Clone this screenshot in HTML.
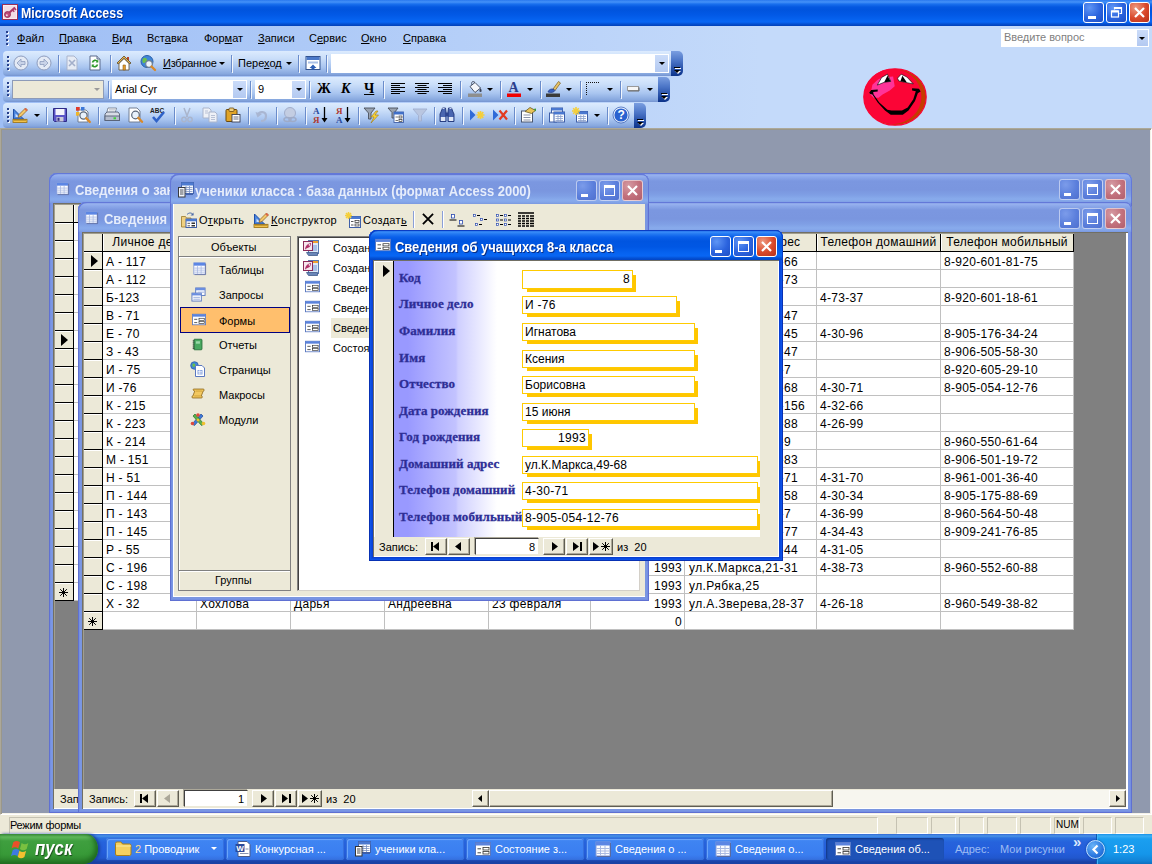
<!DOCTYPE html>
<html lang="ru">
<head>
<meta charset="utf-8">
<title>Microsoft Access</title>
<style>
*{box-sizing:border-box;margin:0;padding:0}
html,body{width:1152px;height:864px;overflow:hidden;background:#9099ae}
body{position:relative;font:11px "Liberation Sans",sans-serif;color:#000}
div,span,b,svg,em{position:absolute}
.s{position:static}
u{text-decoration:underline;text-underline-offset:1px}
svg{overflow:visible}
span,b{white-space:nowrap}
/* ---------- application title bar ---------- */
#title{left:0;top:0;width:1152px;height:26px;background:linear-gradient(#2a78ee 0,#4592f8 2px,#1a70ee 4px,#0558e0 7px,#0054de 10px,#0259e6 15px,#0663f0 20px,#0866f4 22px,#0450d2 24px,#0140b8 26px)}
.cap{font:bold 14px "Liberation Sans",sans-serif;color:#fff;text-shadow:1px 1px 0 #0a2d84;white-space:nowrap;transform-origin:0 50%;transform:scaleX(.924)}
.xb{width:21px;height:21px;border:1px solid #fff;border-radius:3px;background:radial-gradient(circle at 30% 25%,#5e95f5 0,#2b63de 55%,#1d4fc4 100%)}
.xb.c{background:radial-gradient(circle at 30% 25%,#ee9a80 0,#d9482a 55%,#b5311a 100%)}
.xb.i{border-color:rgba(255,255,255,.6);background:radial-gradient(circle at 30% 25%,#7c9cea 0,#5b7fdc 55%,#4f70cf 100%)}
.xb.c.i{background:radial-gradient(circle at 30% 25%,#d59aa3 0,#c2707c 55%,#b05f6d 100%)}
.xb em{position:absolute;background:#fff}
/* ---------- menu + toolbars ---------- */
#dock{left:0;top:26px;width:1152px;height:102px;background:linear-gradient(90deg,#9ebef5 0,#c4dafa 66%,#c4dafa 100%)}
.m{top:6px;font-size:11px}
.grip{width:2px;background:repeating-linear-gradient(#27408b 0,#27408b 2px,transparent 2px,transparent 4px);filter:drop-shadow(1px 1px 0 #f0f5fd)}
.tb{height:25px;border-radius:4px 0 0 4px;background:linear-gradient(#dcebfe 0,#cadef9 30%,#a9c5f0 65%,#86a7de 92%,#7593cf 100%)}
.tbend{width:12px;height:25px;border-radius:0 5px 5px 0;background:linear-gradient(#7a9ee0 0,#4a74c6 40%,#1d469f 80%,#0d3389 100%)}
.sep{width:1px;height:17px;background:#6a8ccb;box-shadow:1px 1px 0 #f1f6fd}
.combo{background:#fff;height:19px}
.cbt{width:13px;height:17px;background:linear-gradient(#cbdcf9,#b3c9f1)}
.dn{width:0;height:0;border:3px solid transparent;border-top:3px solid #000;border-bottom:0}
/* ---------- MDI windows ---------- */
.win{border-radius:8px 8px 0 0}
.win.in{background:#7a96df;box-shadow:inset 0 0 0 1px #5f70d2,inset 0 0 0 2px #7590e2,inset 0 0 0 3px #7a96e4}
.win.ac{background:#0a40d2;box-shadow:inset 0 0 0 1px #0831b4,inset 0 0 0 2px #0d52e8,inset 0 0 0 3px #0a4be0}
.ttl{left:0;top:0;height:30px;border-radius:8px 8px 0 0}
.in>.ttl{background:linear-gradient(#7088de 0,#98b2ee 2px,#8ca8ea 4px,#7b97e0 8px,#7a96df 17px,#7f9fe5 22px,#88abec 26px,#84a6e9 28px,#7b98e0 30px)}
.ac>.ttl{background:linear-gradient(#0a50dc 0,#3a8df8 2px,#2278f2 4px,#0b60ea 7px,#0055e0 11px,#0057e4 17px,#0663f0 23px,#0866f4 26px,#0452d6 28px,#0244c4 30px)}
.in>.ttl{box-shadow:inset 1px 1px 0 #6378d8,inset -1px 0 0 #6378d8}
.ac>.ttl{box-shadow:inset 1px 1px 0 #0a3cc4,inset -1px 0 0 #0a3cc4}
.in .cap{color:#e6edfb;text-shadow:none}
.face{background:#ece9d8}
.hd{background:#ece9d8;border-right:1px solid #000;border-bottom:1px solid #000;box-shadow:inset 1px 1px 0 #fff}
.g{font:12px "Liberation Sans",sans-serif}
.btn3{background:#ece9d8;border:1px solid;border-color:#fff #5f5d52 #5f5d52 #fff;box-shadow:inset -1px -1px 0 #aca899}
.fl{font:bold 13px "Liberation Serif",serif;color:#2e2e96;-webkit-text-stroke:.3px #2e2e96;letter-spacing:.08px}
.fv{background:#fff;border:1px solid #ffcb00;font:12px "Liberation Sans",sans-serif;line-height:16px;letter-spacing:.3px;white-space:nowrap}
.gd{letter-spacing:.3px}
.ga{letter-spacing:.42px}
.gh{letter-spacing:.28px}
/* ---------- status + taskbar ---------- */
#status{left:0;top:814px;width:1152px;height:22px;background:#ece9d8;border-top:1px solid #fff}
#task{left:0;top:836px;width:1152px;height:28px;background:linear-gradient(#3168d5 0,#4993e6 2px,#2b71e0 4px,#2663dc 8px,#245ddb 18px,#2157ce 24px,#1941a5 28px)}
.tk{top:3px;height:22px;border-radius:3px;background:linear-gradient(#5a9bf8 0,#3f84f2 3px,#3a7ef0 17px,#356fe0 22px);box-shadow:inset 0 0 0 1px #3570dd,inset 1px 1px 0 1px #6aa4fa;color:#fff;font-size:11px;overflow:hidden}
.tk b{left:29px;top:5px;font-weight:normal}
.tk.on{background:#1e52b7;box-shadow:inset 1px 1px 2px #123784}
</style>
</head>
<body>
<div id="title" class="a">
<svg style="left:2px;top:4px" width="16" height="16" viewBox="0 0 16 16"><rect x=".5" y=".5" width="15" height="15" fill="#f3dde5" stroke="#9a3058"/><rect x="1.500" y="1.500" width="13" height="13" fill="none" stroke="#fbeef2"/><circle cx="5.500" cy="10.500" r="3" fill="#c04a78" stroke="#8a2450" stroke-width=".8"/><circle cx="4.800" cy="11.200" r="1" fill="#f3dde5"/><path d="M7.500 8.500L13 3.500" stroke="#b03868" stroke-width="2.200"/><path d="M10.500 6l1.800 1.800M12.300 4.200l1.800 1.800" stroke="#b03868" stroke-width="1.400"/></svg>
<span class="cap" id="apptitle" style="left:21px;top:5px;transform:scaleX(.884)">Microsoft Access</span>
<div class="xb" style="left:1083px;top:2px"><em style="left:4px;top:13px;width:8px;height:3px"></em></div>
<div class="xb" style="left:1106px;top:2px"><svg style="left:3px;top:3px" width="13" height="13" viewBox="0 0 13 13"><path d="M4.500 3.500V1.500h7v6h-2" fill="none" stroke="#fff" stroke-width="1.200"/><path d="M4.500 2h7" stroke="#fff" stroke-width="2"/><rect x="1.500" y="5" width="7" height="6" fill="none" stroke="#fff" stroke-width="1.200"/><path d="M1.500 5.500h7" stroke="#fff" stroke-width="2"/></svg></div>
<div class="xb c" style="left:1129px;top:2px"><svg style="left:4px;top:4px" width="11" height="11" viewBox="0 0 11 11"><path d="M1 1l9 9M10 1l-9 9" stroke="#fff" stroke-width="2.200"/></svg></div>
</div>
<div id="dock" class="a">
<div class="grip" style="left:6px;top:5px;height:14px"></div>
<span class="m" id="m0" style="left:17px"><u>Ф</u>айл</span>
<span class="m" id="m1" style="left:59px"><u>П</u>равка</span>
<span class="m" id="m2" style="left:112px"><u>В</u>ид</span>
<span class="m" id="m3" style="left:147px">Вст<u>а</u>вка</span>
<span class="m" id="m4" style="left:204px">Фор<u>м</u>ат</span>
<span class="m" id="m5" style="left:258px"><u>З</u>аписи</span>
<span class="m" id="m6" style="left:309px">С<u>е</u>рвис</span>
<span class="m" id="m7" style="left:361px"><u>О</u>кно</span>
<span class="m" id="m8" style="left:403px"><u>С</u>правка</span>
<div class="combo" style="left:1001px;top:3px;width:148px;height:18px;border:1px solid #fff"><span style="left:2px;top:1px;color:#7f7f7f;letter-spacing:-.05px">Введите вопрос</span><div class="cbt" style="left:135px;top:0;height:16px;width:11px"></div><div class="dn" style="left:137px;top:7px"></div></div>
<div class="tb" style="left:3px;top:25px;width:672px"></div>
<div class="grip" style="left:7px;top:30px;height:15px"></div>
<svg style="left:13px;top:29px" width="16" height="16" viewBox="0 0 16 16" preserveAspectRatio="none"><circle cx="8" cy="8" r="7" fill="#e4eaf5" stroke="#8e9dbe"/><path d="M4 8l4-4v2.5h4v3H8V12z" fill="#c9d3e8" stroke="#8e9dbe" stroke-width=".8"/></svg>
<svg style="left:36px;top:29px" width="16" height="16" viewBox="0 0 16 16" preserveAspectRatio="none"><circle cx="8" cy="8" r="7" fill="#e4eaf5" stroke="#8e9dbe"/><path d="M12 8L8 4v2.5H4v3h4V12z" fill="#c9d3e8" stroke="#8e9dbe" stroke-width=".8"/></svg>
<div class="sep" style="left:58px;top:29px"></div>
<svg style="left:64px;top:29px" width="16" height="16" viewBox="0 0 16 16" preserveAspectRatio="none"><path d="M3 1h7l3 3v11H3z" fill="#e6ebf4" stroke="#a9b4cc"/><path d="M5 5l6 6M11 5l-6 6" stroke="#a3afca" stroke-width="1.6"/></svg>
<svg style="left:87px;top:29px" width="16" height="16" viewBox="0 0 16 16" preserveAspectRatio="none"><path d="M3 1h7l3 3v11H3z" fill="#fff" stroke="#5b6b8c"/><path d="M10 1v3h3" fill="#d5dcea" stroke="#5b6b8c"/><path d="M5.5 7.5a2.8 2.8 0 0 1 5-1M10.5 9.5a2.8 2.8 0 0 1-5 1" fill="none" stroke="#2f9a2a" stroke-width="1.6"/><path d="M11.3 4.6v2.8H8.6zM4.7 12.4V9.6h2.7z" fill="#2f9a2a"/></svg>
<div class="sep" style="left:110px;top:29px"></div>
<svg style="left:116px;top:29px" width="16" height="16" viewBox="0 0 16 16" preserveAspectRatio="none"><path d="M11 2h2v4h-2z" fill="#b5442a"/><path d="M1 8l7-7 7 7-1.2 1L8 3.2 2.2 9z" fill="#e9b44c" stroke="#5a4a28" stroke-width=".8"/><path d="M3 8.5L8 3.6l5 4.9V15H3z" fill="#fff" stroke="#5a4a28" stroke-width=".8"/><path d="M7 10h2.4v5H7z" fill="#e9a02c" stroke="#8a5a1a" stroke-width=".6"/></svg>
<svg style="left:140px;top:29px" width="16" height="16" viewBox="0 0 16 16" preserveAspectRatio="none"><circle cx="7" cy="6.5" r="6" fill="#3f86d8" stroke="#2b5fa8"/><path d="M3 3.5c2-1.5 3.5-.5 4 1s-1.500 3-3 3.500-2-2.500-1-4.500zM8.500 8c1.500-.5 3 0 3 1.500s-1.500 2.500-3 2z" fill="#6cc04a"/><circle cx="9" cy="9" r="3.300" fill="#eef5fb" stroke="#6f7f95" stroke-width="1.200"/><path d="M11.500 11.500l3.500 3.500" stroke="#d98a2b" stroke-width="2.400" stroke-linecap="round"/></svg>
<span id="izb" style="left:163px;top:31px;letter-spacing:-.25px"><u>И</u>збранное</span>
<div class="dn" style="left:219px;top:36px"></div>
<div class="sep" style="left:231px;top:29px"></div>
<span id="per" style="left:238px;top:31px">Пере<u>х</u>од</span>
<div class="dn" style="left:286px;top:36px"></div>
<div class="sep" style="left:298px;top:29px"></div>
<svg style="left:304.5px;top:29px" width="16" height="16" viewBox="0 0 16 16" preserveAspectRatio="none"><rect x="1" y="1.500" width="14" height="13" fill="#fff" stroke="#31528f"/><rect x="1.500" y="2" width="13" height="3" fill="#4a78c8"/><rect x="3" y="6.500" width="10" height="2" fill="#a9c0e6"/><path d="M8 9.500l3.500 3.500h-2v1.500h-3V13h-2z" fill="#2d5fb5"/></svg>
<div class="sep" style="left:326px;top:29px"></div>
<div class="combo" style="left:331px;top:28px;width:338px"><div class="cbt" style="left:324px;top:1px"></div><div class="dn" style="left:328px;top:8px"></div></div>
<div class="tbend" style="left:671px;top:25px"><div style="left:4px;top:17px;width:6px;height:1px;background:#fff"></div><div class="dn" style="left:4px;top:20px;border-top-color:#fff"></div><div style="left:3px;top:16px;width:6px;height:1px;background:#000"></div><div class="dn" style="left:3px;top:19px"></div></div>
<div class="tb" style="left:3px;top:51px;width:660px"></div>
<div class="grip" style="left:7px;top:56px;height:15px"></div>
<div style="left:12px;top:54px;width:92px;height:19px;background:#ece9d8;border:1px solid #8d9bb8"></div>
<div class="dn" style="left:94px;top:62px;border-top-color:#9a9a9a"></div>
<div class="sep" style="left:108px;top:55px"></div>
<div class="combo" style="left:112px;top:54px;width:135px"><span style="left:3px;top:3px">Arial Cyr</span><div class="cbt" style="left:121px;top:1px"></div><div class="dn" style="left:125px;top:8px"></div></div>
<div class="sep" style="left:250px;top:55px"></div>
<div class="combo" style="left:255px;top:54px;width:51px"><span style="left:3px;top:3px">9</span><div class="cbt" style="left:37px;top:1px"></div><div class="dn" style="left:41px;top:8px"></div></div>
<div class="sep" style="left:309px;top:55px"></div>
<span style="left:317px;top:55px;font:bold 14px 'Liberation Serif',serif">Ж</span>
<span style="left:341px;top:55px;font:italic bold 14px 'Liberation Serif',serif">К</span>
<span style="left:364px;top:55px;font:bold 14px 'Liberation Serif',serif"><u>Ч</u></span>
<div class="sep" style="left:383px;top:55px"></div>
<svg style="left:390px;top:55px" width="16" height="16" viewBox="0 0 16 16" preserveAspectRatio="none"><path d="M1 2.500h14M1 4.500h9M1 6.500h14M1 8.500h9M1 10.500h14M1 12.500h9" stroke="#000" stroke-width="1"/></svg>
<svg style="left:414px;top:55px" width="16" height="16" viewBox="0 0 16 16" preserveAspectRatio="none"><path d="M1 2.500h14M3.500 4.500h9M1 6.500h14M3.500 8.500h9M1 10.500h14M3.500 12.500h9" stroke="#000" stroke-width="1"/></svg>
<svg style="left:437px;top:55px" width="16" height="16" viewBox="0 0 16 16" preserveAspectRatio="none"><path d="M1 2.500h14M6 4.500h9M1 6.500h14M6 8.500h9M1 10.500h14M6 12.500h9" stroke="#000" stroke-width="1"/></svg>
<div class="sep" style="left:460px;top:55px"></div>
<svg style="left:467px;top:55px" width="16" height="16" viewBox="0 0 16 16" preserveAspectRatio="none"><path d="M3 5.500l5-4 5.500 5.500-5.500 4.500z" fill="#f4f6fa" stroke="#3a4358" stroke-width=".9"/><path d="M8 1.500C5 -1 4 2 5 4" fill="none" stroke="#3a4358" stroke-width=".9"/><path d="M13.500 7c1.500 2 1.500 4 0 4s-1.500-2 0-4z" fill="#3a4358"/><rect x="1" y="12.500" width="14" height="3.500" fill="#8e8e8e"/></svg>
<div class="dn" style="left:487px;top:62px"></div>
<div class="sep" style="left:500px;top:55px"></div>
<svg style="left:506px;top:55px" width="16" height="16" viewBox="0 0 16 16" preserveAspectRatio="none"><text x="2.500" y="11" font-family="Liberation Serif,serif" font-size="14" font-weight="bold" fill="#2a3e8c">A</text><rect x="1" y="12.500" width="14" height="3.500" fill="#f00000"/></svg>
<div class="dn" style="left:527px;top:62px"></div>
<div class="sep" style="left:540px;top:55px"></div>
<svg style="left:545px;top:55px" width="16" height="16" viewBox="0 0 16 16" preserveAspectRatio="none"><path d="M8 8l5.500-7.500 2 1.500L10 9.500z" fill="#e8c46a" stroke="#7a5a18" stroke-width=".7"/><path d="M3 11c1-3 4-3.500 6-2.500l1 1c-1 2-4 2.500-7 1.500z" fill="#3a62c0" stroke="#1f3a88" stroke-width=".7"/><rect x="1" y="12.500" width="14" height="3.500" fill="#3a3a3a"/></svg>
<div class="dn" style="left:566px;top:62px"></div>
<div class="sep" style="left:580px;top:55px"></div>
<svg style="left:585px;top:55px" width="16" height="16" viewBox="0 0 16 16" preserveAspectRatio="none"><g shape-rendering="crispEdges" fill="#111"><rect x="1" y="1" width="1" height="1"/><rect x="3" y="1" width="1" height="1"/><rect x="5" y="1" width="1" height="1"/><rect x="7" y="1" width="1" height="1"/><rect x="9" y="1" width="1" height="1"/><rect x="11" y="1" width="1" height="1"/><rect x="13" y="1" width="1" height="1"/><rect x="1" y="3" width="1" height="1"/><rect x="1" y="5" width="1" height="1"/><rect x="1" y="7" width="1" height="1"/><rect x="1" y="9" width="1" height="1"/><rect x="1" y="11" width="1" height="1"/><rect x="1" y="13" width="1" height="1"/></g></svg>
<div class="dn" style="left:607px;top:62px"></div>
<div class="sep" style="left:620px;top:55px"></div>
<svg style="left:625px;top:55px" width="16" height="16" viewBox="0 0 16 16" preserveAspectRatio="none"><rect x="2.500" y="5.500" width="11" height="4" fill="#f6f6f6" stroke="#9a9a9a"/><path d="M3 10h11V6.500" fill="none" stroke="#666" stroke-width="1"/></svg>
<div class="dn" style="left:647px;top:62px"></div>
<div class="tbend" style="left:658px;top:51px"><div style="left:4px;top:17px;width:6px;height:1px;background:#fff"></div><div class="dn" style="left:4px;top:20px;border-top-color:#fff"></div><div style="left:3px;top:16px;width:6px;height:1px;background:#000"></div><div class="dn" style="left:3px;top:19px"></div></div>
<div class="tb" style="left:3px;top:77px;width:636px"></div>
<div class="grip" style="left:7px;top:82px;height:15px"></div>
<svg style="left:12px;top:81px" width="16" height="16" viewBox="0 0 16 16" preserveAspectRatio="none"><path d="M1.500 2v10h10z" fill="#4a86e0" stroke="#1f4fa8"/><path d="M3.500 6.500V10H7z" fill="#cfe0fa"/><rect x="1" y="12.300" width="14" height="3.200" fill="#f1c24a" stroke="#9a6f12" stroke-width=".8"/><path d="M3 12.500v1.500M5 12.500v1.500M7 12.500v1.500M9 12.500v1.500M11 12.500v1.500M13 12.500v1.500" stroke="#7a5608" stroke-width=".7"/><path d="M6 10.500l1-3 6.500-6.500 2 2L9 9.500z" fill="#f3c86a" stroke="#8a5a1a" stroke-width=".7"/><path d="M13.500 1l2 2-1.200 1.200-2-2z" fill="#e0604a"/></svg>
<div class="dn" style="left:34px;top:88px"></div>
<div class="sep" style="left:46px;top:81px"></div>
<svg style="left:52px;top:81px" width="16" height="16" viewBox="0 0 16 16" preserveAspectRatio="none"><path d="M1.500 1.500h13v13h-12l-1-1z" fill="#5a55c8" stroke="#2f2b86"/><rect x="3.500" y="2" width="9" height="6" fill="#f4f4fb"/><rect x="4.500" y="10" width="7" height="4.500" fill="#c9c9d8"/><rect x="5.500" y="10.800" width="2" height="3" fill="#2f2b86"/></svg>
<svg style="left:75px;top:81px" width="16" height="16" viewBox="0 0 16 16" preserveAspectRatio="none"><rect x="1" y="0" width="3.500" height="3.500" fill="#e03a2a"/><rect x="1" y="5" width="3.500" height="3.500" fill="#f0b428"/><rect x="6" y="0" width="3.500" height="3.500" fill="#3c78d8"/><path d="M3 3h8l2 2v10H3z" fill="#fff" stroke="#6a7588" stroke-width=".9"/><rect x="1" y="0" width="3.500" height="3.500" fill="#e03a2a"/><rect x="1" y="5" width="3.500" height="3.500" fill="#f0b428"/><rect x="6" y="0.500" width="3" height="3" fill="#3c78d8"/><circle cx="8.500" cy="8.500" r="3.600" fill="#e8f1fb" stroke="#5a6678" stroke-width="1.200"/><path d="M11.200 11.200l3.600 3.800" stroke="#d98a2b" stroke-width="2.400" stroke-linecap="round"/></svg>
<div class="sep" style="left:98px;top:81px"></div>
<svg style="left:104px;top:81px" width="16" height="16" viewBox="0 0 16 16" preserveAspectRatio="none"><path d="M4 1h8.500l-1.500 5.500H2.500z" fill="#fff" stroke="#6a7588" stroke-width=".8"/><path d="M1 7l2-2h11l1.500 2v6.500H1z" fill="#d8dce6" stroke="#555f74" stroke-width=".9"/><rect x="1" y="9" width="14.500" height="4.500" fill="#b4bccd" stroke="#555f74" stroke-width=".9"/><rect x="9.500" y="10.300" width="2.500" height="2" fill="#3fd03a"/><path d="M5 2.800h6M4.600 4.300h6" stroke="#9aa3b5" stroke-width=".7"/></svg>
<svg style="left:127px;top:81px" width="16" height="16" viewBox="0 0 16 16" preserveAspectRatio="none"><path d="M2 1h8l3 3v11H2z" fill="#fff" stroke="#6a7588" stroke-width=".9"/><circle cx="8.500" cy="8" r="3.800" fill="#e8f1fb" stroke="#5a6678" stroke-width="1.200"/><path d="M11.300 10.800l3.700 4" stroke="#d98a2b" stroke-width="2.400" stroke-linecap="round"/></svg>
<svg style="left:150px;top:81px" width="16" height="16" viewBox="0 0 16 16" preserveAspectRatio="none"><text x="0" y="6" font-family="Liberation Sans,sans-serif" font-size="6.500" font-weight="bold" fill="#222">ABC</text><path d="M3 10l3.500 4L14 5" fill="none" stroke="#2f62c8" stroke-width="2.600"/></svg>
<div class="sep" style="left:174px;top:81px"></div>
<svg style="left:179px;top:81px" width="16" height="16" viewBox="0 0 16 16" preserveAspectRatio="none"><path d="M5 1l3.500 9M11 1L7.500 10" stroke="#aab5cc" stroke-width="1.500" fill="none"/><circle cx="5" cy="12.500" r="2.200" fill="none" stroke="#aab5cc" stroke-width="1.400"/><circle cx="11" cy="12.500" r="2.200" fill="none" stroke="#aab5cc" stroke-width="1.400"/></svg>
<svg style="left:202px;top:81px" width="16" height="16" viewBox="0 0 16 16" preserveAspectRatio="none"><path d="M1 1h6l2 2v8H1z" fill="#eef1f7" stroke="#aab5cc"/><path d="M7 5h6l2 2v8H7z" fill="#eef1f7" stroke="#aab5cc"/><path d="M9 8.500h4M9 10.500h4M9 12.500h4M3 4h3M3 6h3" stroke="#aab5cc" stroke-width=".8"/></svg>
<svg style="left:225px;top:81px" width="16" height="16" viewBox="0 0 16 16" preserveAspectRatio="none"><rect x="1" y="2.500" width="11" height="12" rx="1" fill="#e0a428" stroke="#6a4a10"/><rect x="4" y="1" width="5" height="3.500" rx="1" fill="#f0d080" stroke="#6a4a10" stroke-width=".8"/><rect x="7" y="7.500" width="8" height="7.500" fill="#fff" stroke="#3a3f55" stroke-width=".9"/><path d="M8.500 10h5M8.500 12h5" stroke="#5a6078" stroke-width=".9"/></svg>
<div class="sep" style="left:248px;top:81px"></div>
<svg style="left:254px;top:81px" width="16" height="16" viewBox="0 0 16 16" preserveAspectRatio="none"><path d="M4 8c1-4 8-4 8 1s-3 5-5 5" fill="none" stroke="#a9b6d2" stroke-width="2.200"/><path d="M1.500 5l2 5.500L8 7z" fill="#a9b6d2"/></svg>
<div class="sep" style="left:276px;top:81px"></div>
<svg style="left:282px;top:81px" width="16" height="16" viewBox="0 0 16 16" preserveAspectRatio="none"><circle cx="8" cy="6" r="5.500" fill="#c3cde2" stroke="#a2aecb"/><ellipse cx="5.500" cy="12.500" rx="3.500" ry="2" fill="none" stroke="#9eabc8" stroke-width="1.500"/><ellipse cx="10.500" cy="12.500" rx="3.500" ry="2" fill="none" stroke="#9eabc8" stroke-width="1.500"/></svg>
<div class="sep" style="left:305px;top:81px"></div>
<svg style="left:313px;top:81px" width="16" height="16" viewBox="0 0 16 16" preserveAspectRatio="none"><text x="0" y="7" font-family="Liberation Serif,serif" font-size="9" font-weight="bold" fill="#2a4a9c">А</text><text x="0" y="15.500" font-family="Liberation Serif,serif" font-size="9" font-weight="bold" fill="#b03a30">Я</text><path d="M11.500 0v13" stroke="#000" stroke-width="1.300"/><path d="M8.500 11h6l-3 4.500z" fill="#000"/></svg>
<svg style="left:336px;top:81px" width="16" height="16" viewBox="0 0 16 16" preserveAspectRatio="none"><text x="0" y="7" font-family="Liberation Serif,serif" font-size="9" font-weight="bold" fill="#b03a30">Я</text><text x="0" y="15.500" font-family="Liberation Serif,serif" font-size="9" font-weight="bold" fill="#2a4a9c">А</text><path d="M11.500 0v13" stroke="#000" stroke-width="1.300"/><path d="M8.500 11h6l-3 4.500z" fill="#000"/></svg>
<div class="sep" style="left:358px;top:81px"></div>
<svg style="left:364px;top:81px" width="16" height="16" viewBox="0 0 16 16" preserveAspectRatio="none"><path d="M0 1h11L7 6v6H4.500V6z" fill="#9aa3b0" stroke="#4a505c" stroke-width=".9"/><path d="M12 4L7 10h3l-3 6 7.500-8H11l3-4z" fill="#f8d23a" stroke="#a07a10" stroke-width=".6"/></svg>
<svg style="left:388px;top:81px" width="16" height="16" viewBox="0 0 16 16" preserveAspectRatio="none"><path d="M0 1h10L6.500 5.500V11H4V5.500z" fill="#9aa3b0" stroke="#4a505c" stroke-width=".9"/><rect x="6" y="5" width="9.500" height="10.500" fill="#fff" stroke="#3f5fa8" stroke-width=".9"/><rect x="6" y="5" width="9.500" height="2.500" fill="#3f6fc8"/><rect x="11" y="9" width="3" height="2" fill="#fff" stroke="#333" stroke-width=".7"/><rect x="11" y="12.500" width="3" height="2" fill="#fff" stroke="#333" stroke-width=".7"/><path d="M7.500 10h2.500M7.500 13.500h2.500" stroke="#555" stroke-width=".8"/></svg>
<svg style="left:412px;top:81px" width="16" height="16" viewBox="0 0 16 16" preserveAspectRatio="none"><path d="M1 2h14L9.500 8.500V14h-3V8.500z" fill="#b9c6e0" stroke="#a0afcf" stroke-width=".9"/></svg>
<div class="sep" style="left:434px;top:81px"></div>
<svg style="left:439px;top:81px" width="16" height="16" viewBox="0 0 16 16" preserveAspectRatio="none"><path d="M2 5l1.500-4h3L7 5v9.500H1V7zM14 5l-1.500-4h-3L9 5v9.500h6V7z" fill="#4a66b0" stroke="#1f3478" stroke-width=".9"/><rect x="6.500" y="5.500" width="3" height="4" fill="#2d4590"/><rect x="1.800" y="10" width="4.500" height="4" fill="#dfe7f6"/><rect x="9.800" y="10" width="4.500" height="4" fill="#dfe7f6"/><path d="M3.500 1.500h2M10.500 1.500h2" stroke="#c9d6f0" stroke-width="1"/></svg>
<div class="sep" style="left:462px;top:81px"></div>
<svg style="left:469px;top:81px" width="16" height="16" viewBox="0 0 16 16" preserveAspectRatio="none"><path d="M1 2.500l5.500 5.500L1 13.500z" fill="#2f6ad8"/><path d="M11.500 4v8M7.500 8h8M8.700 5.200l5.600 5.600M14.300 5.200l-5.600 5.600" stroke="#f5cf3a" stroke-width="1.700"/></svg>
<svg style="left:492px;top:81px" width="16" height="16" viewBox="0 0 16 16" preserveAspectRatio="none"><path d="M1 2.500l5.500 5.500L1 13.500z" fill="#2f6ad8"/><path d="M7.500 3.500l7.500 9M15 3.500l-7.500 9" stroke="#e23a22" stroke-width="2.200"/></svg>
<div class="sep" style="left:514px;top:81px"></div>
<svg style="left:520px;top:81px" width="16" height="16" viewBox="0 0 16 16" preserveAspectRatio="none"><rect x="1.500" y="4" width="11" height="11" fill="#fff" stroke="#4a566e"/><path d="M3.500 8h7M3.500 10.500h7M3.500 13h7" stroke="#8a94aa" stroke-width="1"/><path d="M5 4.500l5-4 5.500 3-4 3z" fill="#e9c45a" stroke="#6a5a20" stroke-width=".8"/><path d="M13.500 2l2.500-.5v3z" fill="#3a9a3a"/></svg>
<div class="sep" style="left:542px;top:81px"></div>
<svg style="left:549px;top:81px" width="16" height="16" viewBox="0 0 16 16" preserveAspectRatio="none"><rect x="2.500" y="1" width="11" height="9" fill="#fff" stroke="#3f5fa8"/><rect x="2.500" y="1" width="11" height="2.500" fill="#4a78d0"/><rect x="0.500" y="6" width="7" height="9" fill="#fff" stroke="#3f5fa8"/><rect x="5" y="5" width="10.500" height="10" fill="#fff" stroke="#3f5fa8"/><rect x="5" y="5" width="10.500" height="2.500" fill="#4a78d0"/><path d="M6.500 9.500h7.500M6.500 11.500h7.500M6.500 13.500h7.500M9 8v7M11.700 8v7" stroke="#8aa0cc" stroke-width=".8"/></svg>
<svg style="left:572px;top:81px" width="16" height="16" viewBox="0 0 16 16" preserveAspectRatio="none"><rect x="4.500" y="4.500" width="11" height="10.500" fill="#fff" stroke="#3f5fa8"/><rect x="4.500" y="4.500" width="11" height="2.800" fill="#4a78d0"/><path d="M6 9.500h8M6 11.500h8M6 13.500h8M8.800 8v7M11.600 8v7" stroke="#8aa0cc" stroke-width=".8"/><path d="M4 0v8M0 4h8M1.200 1.200l5.600 5.600M6.800 1.200L1.200 6.800" stroke="#f5cf3a" stroke-width="1.600"/></svg>
<div class="dn" style="left:594px;top:88px"></div>
<div class="sep" style="left:607px;top:81px"></div>
<svg style="left:613px;top:81px" width="16" height="16" viewBox="0 0 16 16" preserveAspectRatio="none"><circle cx="8" cy="8" r="7.300" fill="#2a62d0" stroke="#eaf1fc" stroke-width="1.400"/><circle cx="8" cy="8" r="8" fill="none" stroke="#2a55b0" stroke-width=".7"/><text x="4.600" y="12.300" font-family="Liberation Sans,sans-serif" font-size="12" font-weight="bold" fill="#fff">?</text></svg>
<div class="tbend" style="left:634px;top:77px"><div style="left:4px;top:17px;width:6px;height:1px;background:#fff"></div><div class="dn" style="left:4px;top:20px;border-top-color:#fff"></div><div style="left:3px;top:16px;width:6px;height:1px;background:#000"></div><div class="dn" style="left:3px;top:19px"></div></div>
<svg style="left:855px;top:36px" width="80" height="70" viewBox="0 0 80 70"><ellipse cx="40" cy="35" rx="31.2" ry="28.2" fill="#c43c00"/><ellipse cx="37.6" cy="34.6" rx="28.8" ry="27.6" fill="#fb0536"/><ellipse cx="40" cy="35" rx="31.2" ry="28.2" fill="none" stroke="#fb0536" stroke-width="1.2"/><polygon points="26.7,15.4 38.1,14.6 39.7,24.3 34.8,28.4 27.6,32.4 23.5,35.7 18.6,35.7 15.4,32.4 17.4,22.7 22.7,17.8" fill="#ff3398"/><polygon points="22.3,23.1 26.7,15.4 32.4,12.2 35.7,19.4 29.2,20.3" fill="#fff" stroke="#000" stroke-width=".6"/><polygon points="29.2,20.3 32.4,13.8 35.7,19.4" fill="#000"/><polygon points="42.5,16.2 46.2,12.2 51.9,15.0 58.3,21.9 51.9,20.7 43.8,19.0" fill="#fff" stroke="#000" stroke-width=".6"/><polygon points="45.4,19.2 47.4,13.8 51.9,20.4" fill="#000"/><polygon points="14.2,30.8 16.2,28.0 22.7,27.6 22.7,29.6 18.2,30.0 18.6,32.4 24.3,40.5 32.4,47.8 36.5,48.6 47.0,48.6 52.7,45.4 58.3,37.3 60.8,29.2 57.1,28.4 57.1,26.3 64.0,26.7 65.6,29.6 62.8,31.2 60.0,38.9 53.5,48.6 47.8,52.7 35.7,52.7 30.0,48.6 22.7,40.5 17.4,32.4 15.4,32.0" fill="#000"/></svg>
</div>
<div style="left:0;top:128px;width:1152px;height:687px;background:#9099ae;border:1px solid;border-color:#aca899 #fff #fff #aca899;box-shadow:inset 1px 1px 0 #9a978a,inset -1px -1px 0 #f4f2e8"></div>
<div class="win in" id="w1" style="left:49px;top:173px;width:1083px;height:640px">
<div class="ttl" style="width:1083px"></div>
<svg style="left:7px;top:9px" width="13" height="13" viewBox="0 0 16 16" preserveAspectRatio="none"><rect x="1" y="1" width="14" height="14" fill="#fbfcff" stroke="#7f98d8"/><rect x="1" y="1" width="14" height="3.500" fill="#5c86e4"/><path d="M1.500 7.500h13M1.500 10h13M1.500 12.500h13M5.500 5v9.500M10 5v9.500" stroke="#a9b9e2" stroke-width="1"/><path d="M15.500 2v13.500H2" fill="none" stroke="#5a6898" stroke-width=".9"/></svg>
<span class="cap" id="w1cap" style="left:26px;top:9px">Сведения о занятиях</span>
<div class="xb i" style="left:1010px;top:6px"><em style="left:4px;top:13px;width:7px;height:3px"></em></div>
<div class="xb i" style="left:1033px;top:6px"><em style="left:4px;top:4px;width:11px;height:3px"></em><em style="left:4px;top:6px;width:1px;height:9px"></em><em style="left:14px;top:6px;width:1px;height:9px"></em><em style="left:4px;top:14px;width:11px;height:1px"></em></div>
<div class="xb c i" style="left:1056px;top:6px"><svg style="left:4px;top:4px" width="11" height="11" viewBox="0 0 11 11"><path d="M1 1l9 9M10 1l-9 9" stroke="#fff" stroke-width="2.200"/></svg></div>
<div id="w1c" style="left:4px;top:30px;width:1075px;height:606px;background:#808080;overflow:hidden;border-top:1px solid #716f64;border-left:1px solid #716f64">
<div style="left:20px;top:0;width:40px;height:397px;background:#fff"></div>
<div class="hd" style="left:0;top:0;width:20px;height:19px"></div>
<div style="left:20px;top:0;width:40px;height:19px;background:#ece9d8;border-bottom:1px solid #000;box-shadow:inset 1px 1px 0 #fff"></div>
<div class="hd" style="left:0;top:19px;width:20px;height:18px"></div>
<div style="left:20px;top:36px;width:40px;height:1px;background:#c0c0c0"></div>
<div class="hd" style="left:0;top:37px;width:20px;height:18px"></div>
<div style="left:20px;top:54px;width:40px;height:1px;background:#c0c0c0"></div>
<div class="hd" style="left:0;top:55px;width:20px;height:18px"></div>
<div style="left:20px;top:72px;width:40px;height:1px;background:#c0c0c0"></div>
<div class="hd" style="left:0;top:73px;width:20px;height:18px"></div>
<div style="left:20px;top:90px;width:40px;height:1px;background:#c0c0c0"></div>
<div class="hd" style="left:0;top:91px;width:20px;height:18px"></div>
<div style="left:20px;top:108px;width:40px;height:1px;background:#c0c0c0"></div>
<div class="hd" style="left:0;top:109px;width:20px;height:18px"></div>
<div style="left:20px;top:126px;width:40px;height:1px;background:#c0c0c0"></div>
<div class="hd" style="left:0;top:127px;width:20px;height:18px"></div>
<div style="left:20px;top:144px;width:40px;height:1px;background:#c0c0c0"></div>
<div class="hd" style="left:0;top:145px;width:20px;height:18px"></div>
<div style="left:20px;top:162px;width:40px;height:1px;background:#c0c0c0"></div>
<div class="hd" style="left:0;top:163px;width:20px;height:18px"></div>
<div style="left:20px;top:180px;width:40px;height:1px;background:#c0c0c0"></div>
<div class="hd" style="left:0;top:181px;width:20px;height:18px"></div>
<div style="left:20px;top:198px;width:40px;height:1px;background:#c0c0c0"></div>
<div class="hd" style="left:0;top:199px;width:20px;height:18px"></div>
<div style="left:20px;top:216px;width:40px;height:1px;background:#c0c0c0"></div>
<div class="hd" style="left:0;top:217px;width:20px;height:18px"></div>
<div style="left:20px;top:234px;width:40px;height:1px;background:#c0c0c0"></div>
<div class="hd" style="left:0;top:235px;width:20px;height:18px"></div>
<div style="left:20px;top:252px;width:40px;height:1px;background:#c0c0c0"></div>
<div class="hd" style="left:0;top:253px;width:20px;height:18px"></div>
<div style="left:20px;top:270px;width:40px;height:1px;background:#c0c0c0"></div>
<div class="hd" style="left:0;top:271px;width:20px;height:18px"></div>
<div style="left:20px;top:288px;width:40px;height:1px;background:#c0c0c0"></div>
<div class="hd" style="left:0;top:289px;width:20px;height:18px"></div>
<div style="left:20px;top:306px;width:40px;height:1px;background:#c0c0c0"></div>
<div class="hd" style="left:0;top:307px;width:20px;height:18px"></div>
<div style="left:20px;top:324px;width:40px;height:1px;background:#c0c0c0"></div>
<div class="hd" style="left:0;top:325px;width:20px;height:18px"></div>
<div style="left:20px;top:342px;width:40px;height:1px;background:#c0c0c0"></div>
<div class="hd" style="left:0;top:343px;width:20px;height:18px"></div>
<div style="left:20px;top:360px;width:40px;height:1px;background:#c0c0c0"></div>
<div class="hd" style="left:0;top:361px;width:20px;height:18px"></div>
<div style="left:20px;top:378px;width:40px;height:1px;background:#c0c0c0"></div>
<div class="hd" style="left:0;top:379px;width:20px;height:18px"></div>
<div style="left:20px;top:396px;width:40px;height:1px;background:#c0c0c0"></div>
<svg style="left:7px;top:130px" width="7" height="12" viewBox="0 0 7 12"><path d="M0 0l7 6.0L0 12z" fill="#000"/></svg>
<svg style="left:5px;top:384px" width="9" height="9" viewBox="0 0 9 9"><path d="M4.500 0v9M0 4.500h9M1.200 1.200l6.600 6.600M7.800 1.200L1.200 7.800" stroke="#000" stroke-width="1"/></svg>
<div style="left:0;top:0;width:1px;height:585px;background:#a19e8f"></div><div style="left:0;top:0;width:70px;height:1px;background:#a19e8f"></div>
<div class="face" style="left:0;top:585px;width:1074px;height:19px"><span style="left:6px;top:4px">Запись:</span></div>
<div style="left:0;top:604px;width:1074px;height:1px;background:#fff"></div>
</div>
</div>
<div class="win in" id="w2" style="left:78px;top:202px;width:1054px;height:611px">
<div class="ttl" style="width:1054px"></div>
<svg style="left:7px;top:9px" width="13" height="13" viewBox="0 0 16 16" preserveAspectRatio="none"><rect x="1" y="1" width="14" height="14" fill="#fbfcff" stroke="#7f98d8"/><rect x="1" y="1" width="14" height="3.500" fill="#5c86e4"/><path d="M1.500 7.500h13M1.500 10h13M1.500 12.500h13M5.500 5v9.500M10 5v9.500" stroke="#a9b9e2" stroke-width="1"/><path d="M15.500 2v13.500H2" fill="none" stroke="#5a6898" stroke-width=".9"/></svg>
<span class="cap" id="w2cap" style="left:26px;top:9px">Сведения об учащихся</span>
<div class="xb i" style="left:981px;top:6px"><em style="left:4px;top:13px;width:7px;height:3px"></em></div>
<div class="xb i" style="left:1004px;top:6px"><em style="left:4px;top:4px;width:11px;height:3px"></em><em style="left:4px;top:6px;width:1px;height:9px"></em><em style="left:14px;top:6px;width:1px;height:9px"></em><em style="left:4px;top:14px;width:11px;height:1px"></em></div>
<div class="xb c i" style="left:1027px;top:6px"><svg style="left:4px;top:4px" width="11" height="11" viewBox="0 0 11 11"><path d="M1 1l9 9M10 1l-9 9" stroke="#fff" stroke-width="2.200"/></svg></div>
<div id="w2c" style="left:4px;top:30px;width:1046px;height:577px;background:#808080;overflow:hidden;border-top:1px solid #716f64;border-left:1px solid #716f64">
<div style="left:20px;top:19px;width:971px;height:378px;background:#fff"></div>
<div class="hd" style="left:0;top:0;width:20px;height:19px"></div>
<div class="hd g" style="left:20px;top:0;width:94px;height:19px;overflow:hidden;text-align:center"><span class="s gh" style="position:static;line-height:18px">Личное дело</span></div>
<div class="hd g" style="left:114px;top:0;width:94px;height:19px;overflow:hidden;text-align:center"><span class="s gh" style="position:static;line-height:18px">Фамилия</span></div>
<div class="hd g" style="left:208px;top:0;width:94px;height:19px;overflow:hidden;text-align:center"><span class="s gh" style="position:static;line-height:18px">Имя</span></div>
<div class="hd g" style="left:302px;top:0;width:104px;height:19px;overflow:hidden;text-align:center"><span class="s gh" style="position:static;line-height:18px">Отчество</span></div>
<div class="hd g" style="left:406px;top:0;width:102px;height:19px;overflow:hidden;text-align:center"><span class="s gh" style="position:static;line-height:18px">Дата рождения</span></div>
<div class="hd g" style="left:508px;top:0;width:94px;height:19px;overflow:hidden;text-align:center"><span class="s gh" style="position:static;line-height:18px">Год рождения</span></div>
<div class="hd g" style="left:602px;top:0;width:132px;height:19px;overflow:hidden;text-align:center"><span class="s gh" style="position:static;line-height:18px">Домашний адрес</span></div>
<div class="hd g" style="left:734px;top:0;width:124px;height:19px;overflow:hidden;text-align:center"><span class="s gh" style="position:static;line-height:18px">Телефон домашний</span></div>
<div class="hd g" style="left:858px;top:0;width:133px;height:19px;overflow:hidden;text-align:center"><span class="s gh" style="position:static;line-height:18px">Телефон мобильный</span></div>
<div class="hd" style="left:0;top:19px;width:20px;height:18px"></div>
<div style="left:20px;top:36px;width:971px;height:1px;background:#c0c0c0"></div>
<div class="hd" style="left:0;top:37px;width:20px;height:18px"></div>
<div style="left:20px;top:54px;width:971px;height:1px;background:#c0c0c0"></div>
<div class="hd" style="left:0;top:55px;width:20px;height:18px"></div>
<div style="left:20px;top:72px;width:971px;height:1px;background:#c0c0c0"></div>
<div class="hd" style="left:0;top:73px;width:20px;height:18px"></div>
<div style="left:20px;top:90px;width:971px;height:1px;background:#c0c0c0"></div>
<div class="hd" style="left:0;top:91px;width:20px;height:18px"></div>
<div style="left:20px;top:108px;width:971px;height:1px;background:#c0c0c0"></div>
<div class="hd" style="left:0;top:109px;width:20px;height:18px"></div>
<div style="left:20px;top:126px;width:971px;height:1px;background:#c0c0c0"></div>
<div class="hd" style="left:0;top:127px;width:20px;height:18px"></div>
<div style="left:20px;top:144px;width:971px;height:1px;background:#c0c0c0"></div>
<div class="hd" style="left:0;top:145px;width:20px;height:18px"></div>
<div style="left:20px;top:162px;width:971px;height:1px;background:#c0c0c0"></div>
<div class="hd" style="left:0;top:163px;width:20px;height:18px"></div>
<div style="left:20px;top:180px;width:971px;height:1px;background:#c0c0c0"></div>
<div class="hd" style="left:0;top:181px;width:20px;height:18px"></div>
<div style="left:20px;top:198px;width:971px;height:1px;background:#c0c0c0"></div>
<div class="hd" style="left:0;top:199px;width:20px;height:18px"></div>
<div style="left:20px;top:216px;width:971px;height:1px;background:#c0c0c0"></div>
<div class="hd" style="left:0;top:217px;width:20px;height:18px"></div>
<div style="left:20px;top:234px;width:971px;height:1px;background:#c0c0c0"></div>
<div class="hd" style="left:0;top:235px;width:20px;height:18px"></div>
<div style="left:20px;top:252px;width:971px;height:1px;background:#c0c0c0"></div>
<div class="hd" style="left:0;top:253px;width:20px;height:18px"></div>
<div style="left:20px;top:270px;width:971px;height:1px;background:#c0c0c0"></div>
<div class="hd" style="left:0;top:271px;width:20px;height:18px"></div>
<div style="left:20px;top:288px;width:971px;height:1px;background:#c0c0c0"></div>
<div class="hd" style="left:0;top:289px;width:20px;height:18px"></div>
<div style="left:20px;top:306px;width:971px;height:1px;background:#c0c0c0"></div>
<div class="hd" style="left:0;top:307px;width:20px;height:18px"></div>
<div style="left:20px;top:324px;width:971px;height:1px;background:#c0c0c0"></div>
<div class="hd" style="left:0;top:325px;width:20px;height:18px"></div>
<div style="left:20px;top:342px;width:971px;height:1px;background:#c0c0c0"></div>
<div class="hd" style="left:0;top:343px;width:20px;height:18px"></div>
<div style="left:20px;top:360px;width:971px;height:1px;background:#c0c0c0"></div>
<div class="hd" style="left:0;top:361px;width:20px;height:18px"></div>
<div style="left:20px;top:378px;width:971px;height:1px;background:#c0c0c0"></div>
<div class="hd" style="left:0;top:379px;width:20px;height:18px"></div>
<div style="left:20px;top:396px;width:971px;height:1px;background:#c0c0c0"></div>
<div style="left:113px;top:19px;width:1px;height:378px;background:#c0c0c0"></div>
<div style="left:207px;top:19px;width:1px;height:378px;background:#c0c0c0"></div>
<div style="left:301px;top:19px;width:1px;height:378px;background:#c0c0c0"></div>
<div style="left:405px;top:19px;width:1px;height:378px;background:#c0c0c0"></div>
<div style="left:507px;top:19px;width:1px;height:378px;background:#c0c0c0"></div>
<div style="left:601px;top:19px;width:1px;height:378px;background:#c0c0c0"></div>
<div style="left:733px;top:19px;width:1px;height:378px;background:#c0c0c0"></div>
<div style="left:857px;top:19px;width:1px;height:378px;background:#c0c0c0"></div>
<div style="left:990px;top:19px;width:1px;height:378px;background:#c0c0c0"></div>
<svg style="left:8px;top:22px" width="7" height="12" viewBox="0 0 7 12"><path d="M0 0l7 6.0L0 12z" fill="#000"/></svg>
<svg style="left:5px;top:384px" width="9" height="9" viewBox="0 0 9 9"><path d="M4.500 0v9M0 4.500h9M1.200 1.200l6.600 6.600M7.800 1.200L1.200 7.800" stroke="#000" stroke-width="1"/></svg>
<span class="g gd" style="left:23px;top:22px">А - 117</span>
<span class="g gd" style="left:508px;width:91px;text-align:right;top:22px">1993</span>
<span class="g ga" style="left:606px;top:22px">ул.К.Маркса,21-66</span>
<span class="g gd" style="left:861px;top:22px">8-920-601-81-75</span>
<span class="g gd" style="left:23px;top:40px">А - 112</span>
<span class="g gd" style="left:508px;width:91px;text-align:right;top:40px">1993</span>
<span class="g ga" style="left:606px;top:40px">ул.К.Маркса,25-73</span>
<span class="g gd" style="left:23px;top:58px">Б-123</span>
<span class="g gd" style="left:508px;width:91px;text-align:right;top:58px">1993</span>
<span class="g ga" style="left:606px;top:58px">ул.Рябка,12</span>
<span class="g gd" style="left:737px;top:58px">4-73-37</span>
<span class="g gd" style="left:861px;top:58px">8-920-601-18-61</span>
<span class="g gd" style="left:23px;top:76px">В - 71</span>
<span class="g gd" style="left:508px;width:91px;text-align:right;top:76px">1993</span>
<span class="g ga" style="left:606px;top:76px">ул.К.Маркса,27-47</span>
<span class="g gd" style="left:23px;top:94px">Е - 70</span>
<span class="g gd" style="left:508px;width:91px;text-align:right;top:94px">1993</span>
<span class="g ga" style="left:606px;top:94px">ул.К.Маркса,23-45</span>
<span class="g gd" style="left:737px;top:94px">4-30-96</span>
<span class="g gd" style="left:861px;top:94px">8-905-176-34-24</span>
<span class="g gd" style="left:23px;top:112px">З - 43</span>
<span class="g gd" style="left:508px;width:91px;text-align:right;top:112px">1993</span>
<span class="g ga" style="left:606px;top:112px">ул.К.Маркса,29-47</span>
<span class="g gd" style="left:861px;top:112px">8-906-505-58-30</span>
<span class="g gd" style="left:23px;top:130px">И - 75</span>
<span class="g gd" style="left:508px;width:91px;text-align:right;top:130px">1993</span>
<span class="g ga" style="left:606px;top:130px">ул.К.Маркса,47-7</span>
<span class="g gd" style="left:861px;top:130px">8-920-605-29-10</span>
<span class="g gd" style="left:23px;top:148px">И -76</span>
<span class="g gd" style="left:117px;top:148px">Игнатова</span>
<span class="g gd" style="left:211px;top:148px">Ксения</span>
<span class="g gd" style="left:305px;top:148px">Борисовна</span>
<span class="g gd" style="left:409px;top:148px">15 июня</span>
<span class="g gd" style="left:508px;width:91px;text-align:right;top:148px">1993</span>
<span class="g ga" style="left:606px;top:148px">ул.К.Маркса,49-68</span>
<span class="g gd" style="left:737px;top:148px">4-30-71</span>
<span class="g gd" style="left:861px;top:148px">8-905-054-12-76</span>
<span class="g gd" style="left:23px;top:166px">К - 215</span>
<span class="g gd" style="left:508px;width:91px;text-align:right;top:166px">1993</span>
<span class="g ga" style="left:606px;top:166px">ул.К.Маркса,21-156</span>
<span class="g gd" style="left:737px;top:166px">4-32-66</span>
<span class="g gd" style="left:23px;top:184px">К - 223</span>
<span class="g gd" style="left:508px;width:91px;text-align:right;top:184px">1993</span>
<span class="g ga" style="left:606px;top:184px">ул.К.Маркса,23-88</span>
<span class="g gd" style="left:737px;top:184px">4-26-99</span>
<span class="g gd" style="left:23px;top:202px">К - 214</span>
<span class="g gd" style="left:508px;width:91px;text-align:right;top:202px">1993</span>
<span class="g ga" style="left:606px;top:202px">ул.К.Маркса,51-9</span>
<span class="g gd" style="left:861px;top:202px">8-960-550-61-64</span>
<span class="g gd" style="left:23px;top:220px">М - 151</span>
<span class="g gd" style="left:508px;width:91px;text-align:right;top:220px">1993</span>
<span class="g ga" style="left:606px;top:220px">ул.К.Маркса,25-83</span>
<span class="g gd" style="left:861px;top:220px">8-906-501-19-72</span>
<span class="g gd" style="left:23px;top:238px">Н - 51</span>
<span class="g gd" style="left:508px;width:91px;text-align:right;top:238px">1993</span>
<span class="g ga" style="left:606px;top:238px">ул.К.Маркса,27-71</span>
<span class="g gd" style="left:737px;top:238px">4-31-70</span>
<span class="g gd" style="left:861px;top:238px">8-961-001-36-40</span>
<span class="g gd" style="left:23px;top:256px">П - 144</span>
<span class="g gd" style="left:508px;width:91px;text-align:right;top:256px">1993</span>
<span class="g ga" style="left:606px;top:256px">ул.К.Маркса,29-58</span>
<span class="g gd" style="left:737px;top:256px">4-30-34</span>
<span class="g gd" style="left:861px;top:256px">8-905-175-88-69</span>
<span class="g gd" style="left:23px;top:274px">П - 143</span>
<span class="g gd" style="left:508px;width:91px;text-align:right;top:274px">1993</span>
<span class="g ga" style="left:606px;top:274px">ул.К.Маркса,53-7</span>
<span class="g gd" style="left:737px;top:274px">4-36-99</span>
<span class="g gd" style="left:861px;top:274px">8-960-564-50-48</span>
<span class="g gd" style="left:23px;top:292px">П - 145</span>
<span class="g gd" style="left:508px;width:91px;text-align:right;top:292px">1993</span>
<span class="g ga" style="left:606px;top:292px">ул.К.Маркса,23-77</span>
<span class="g gd" style="left:737px;top:292px">4-34-43</span>
<span class="g gd" style="left:861px;top:292px">8-909-241-76-85</span>
<span class="g gd" style="left:23px;top:310px">Р - 55</span>
<span class="g gd" style="left:508px;width:91px;text-align:right;top:310px">1993</span>
<span class="g ga" style="left:606px;top:310px">ул.К.Маркса,21-44</span>
<span class="g gd" style="left:737px;top:310px">4-31-05</span>
<span class="g gd" style="left:23px;top:328px">С - 196</span>
<span class="g gd" style="left:508px;width:91px;text-align:right;top:328px">1993</span>
<span class="g ga" style="left:606px;top:328px">ул.К.Маркса,21-31</span>
<span class="g gd" style="left:737px;top:328px">4-38-73</span>
<span class="g gd" style="left:861px;top:328px">8-960-552-60-88</span>
<span class="g gd" style="left:23px;top:346px">С - 198</span>
<span class="g gd" style="left:508px;width:91px;text-align:right;top:346px">1993</span>
<span class="g ga" style="left:606px;top:346px">ул.Рябка,25</span>
<span class="g gd" style="left:23px;top:364px">Х - 32</span>
<span class="g gd" style="left:117px;top:364px">Хохлова</span>
<span class="g gd" style="left:211px;top:364px">Дарья</span>
<span class="g gd" style="left:305px;top:364px">Андреевна</span>
<span class="g gd" style="left:409px;top:364px">23 февраля</span>
<span class="g gd" style="left:508px;width:91px;text-align:right;top:364px">1993</span>
<span class="g ga" style="left:606px;top:364px">ул.А.Зверева,28-37</span>
<span class="g gd" style="left:737px;top:364px">4-26-18</span>
<span class="g gd" style="left:861px;top:364px">8-960-549-38-82</span>
<span class="g gd" style="left:508px;width:91px;text-align:right;top:382px">0</span>
<div style="left:0;top:0;width:1px;height:556px;background:#a19e8f"></div><div style="left:0;top:0;width:991px;height:1px;background:#a19e8f"></div>
<div style="left:1043px;top:0;width:2px;height:576px;background:#fff"></div>
<div style="left:0;top:575px;width:1045px;height:1px;background:#fff"></div>
<div class="face" style="left:0;top:556px;width:1043px;height:19px"></div>
<span style="left:6px;top:560px">Запись:</span>
<div class="btn3" style="left:51px;top:557px;width:22px;height:17px"><div style="left:5px;top:3px;width:2px;height:9px;background:#000"></div><svg style="left:7px;top:3px" width="6" height="9" viewBox="0 0 6 9"><path d="M6 0L0 4.500 6 9z" fill="#000"/></svg></div>
<div class="btn3" style="left:74px;top:557px;width:22px;height:17px"><svg style="left:6px;top:3px" width="6" height="9" viewBox="0 0 6 9"><path d="M6 0L0 4.500 6 9z" fill="#aca899"/></svg></div>
<div style="left:101px;top:557px;width:64px;height:17px;background:#fff;border:1px solid;border-color:#404040 #ece9d8 #ece9d8 #404040;box-shadow:-1px -1px 0 #aca899"><span style="right:3px;top:2px">1</span></div>
<div class="btn3" style="left:169px;top:557px;width:22px;height:17px"><svg style="left:8px;top:3px" width="6" height="9" viewBox="0 0 6 9"><path d="M0 0l6 4.500L0 9z" fill="#000"/></svg></div>
<div class="btn3" style="left:192px;top:557px;width:22px;height:17px"><svg style="left:6px;top:3px" width="6" height="9" viewBox="0 0 6 9"><path d="M0 0l6 4.500L0 9z" fill="#000"/></svg><div style="left:13px;top:3px;width:2px;height:9px;background:#000"></div></div>
<div class="btn3" style="left:215px;top:557px;width:24px;height:17px"><svg style="left:3px;top:3px" width="6" height="9" viewBox="0 0 6 9"><path d="M0 0l6 4.500L0 9z" fill="#000"/></svg><svg style="left:11px;top:3px" width="9" height="9" viewBox="0 0 9 9"><path d="M4.500 0v9M0 4.500h9M1.200 1.200l6.600 6.600M7.800 1.200L1.200 7.800" stroke="#000" stroke-width="1"/></svg></div>
<span style="left:243px;top:560px">из&nbsp; 20</span>
<div style="left:389px;top:557px;width:654px;height:18px;background:#f7f6ef"></div>
<div class="btn3" style="left:389px;top:557px;width:17px;height:17px"><svg style="left:5px;top:4px" width="4" height="7" viewBox="0 0 4 7"><path d="M4 0L0 3.500 4 7z" fill="#000"/></svg></div>
<div class="btn3" style="left:406px;top:557px;width:344px;height:17px"></div>
<div class="btn3" style="left:1026px;top:557px;width:17px;height:17px"><svg style="left:6px;top:4px" width="4" height="7" viewBox="0 0 4 7"><path d="M0 0l4 3.500L0 7z" fill="#000"/></svg></div>
</div>
</div>
<div class="win in" id="w3" style="left:170px;top:174px;width:479px;height:427px">
<div class="ttl" style="width:479px"></div>
<svg style="left:8px;top:8px" width="16" height="16" viewBox="0 0 16 16" preserveAspectRatio="none" opacity=".92"><rect x="3.500" y="0.500" width="12" height="11" fill="#fff" stroke="#3f5fa8"/><rect x="3.500" y="0.500" width="12" height="3" fill="#4a78d0"/><path d="M5 5.500h9.500M5 7.500h9.500M5 9.500h9.500M8 4v7M11.500 4v7" stroke="#7a90c0" stroke-width=".8"/><rect x="0.500" y="5.500" width="6.500" height="9.500" fill="#fff" stroke="#333"/><path d="M2 8h3.500M2 10h3.500M2 12h3.500" stroke="#333" stroke-width=".9"/><path d="M7.500 12.500h7.500" stroke="#3f5fa8"/></svg>
<span class="cap" id="w3cap" style="left:25px;top:9px">ученики класса : база данных (формат Access 2000)</span>
<div class="xb i" style="left:406px;top:6px"><em style="left:4px;top:13px;width:7px;height:3px"></em></div>
<div class="xb i" style="left:429px;top:6px"><em style="left:4px;top:4px;width:11px;height:3px"></em><em style="left:4px;top:6px;width:1px;height:9px"></em><em style="left:14px;top:6px;width:1px;height:9px"></em><em style="left:4px;top:14px;width:11px;height:1px"></em></div>
<div class="xb c i" style="left:452px;top:6px"><svg style="left:4px;top:4px" width="11" height="11" viewBox="0 0 11 11"><path d="M1 1l9 9M10 1l-9 9" stroke="#fff" stroke-width="2.200"/></svg></div>
<div class="face" id="w3c" style="left:3px;top:30px;width:472px;height:393px;overflow:hidden;border-left:1px solid #fff;border-bottom:1px solid #fff">
<svg style="left:7px;top:8px" width="16" height="16" viewBox="0 0 16 16" preserveAspectRatio="none"><path d="M0.500 4.500h4l1 1.500H10v9H0.500z" fill="#f0d080" stroke="#9a7a28" stroke-width=".8"/><path d="M6 2.500c2-2 4.500-2 6 0" fill="none" stroke="#4a6aa8" stroke-width="1"/><path d="M12.500 0.500v3h-3z" fill="#4a6aa8"/><rect x="5" y="7" width="10.500" height="8.500" fill="#fff" stroke="#3f5fa8"/><rect x="5" y="7" width="10.500" height="2.300" fill="#4a78d0"/><rect x="10.500" y="10.500" width="3.500" height="1.500" fill="#333"/><rect x="10.500" y="13" width="3.500" height="1.500" fill="#333"/><path d="M6.500 11.300h2.500M6.500 13.800h2.500" stroke="#444" stroke-width=".9"/></svg>
<span id="otk" style="letter-spacing:.3px;left:25px;top:10px">О<u>т</u>крыть</span>
<svg style="left:79px;top:8px" width="16" height="16" viewBox="0 0 16 16" preserveAspectRatio="none"><path d="M1.500 2v10h10z" fill="#4a86e0" stroke="#1f4fa8"/><path d="M3.500 6.500V10H7z" fill="#cfe0fa"/><rect x="1" y="12.300" width="14" height="3.200" fill="#f1c24a" stroke="#9a6f12" stroke-width=".8"/><path d="M3 12.500v1.500M5 12.500v1.500M7 12.500v1.500M9 12.500v1.500M11 12.500v1.500M13 12.500v1.500" stroke="#7a5608" stroke-width=".7"/><path d="M6 10.500l1-3 6.500-6.500 2 2L9 9.500z" fill="#f3c86a" stroke="#8a5a1a" stroke-width=".7"/><path d="M13.500 1l2 2-1.200 1.200-2-2z" fill="#e0604a"/></svg>
<span id="kon" style="letter-spacing:.3px;left:97px;top:10px"><u>К</u>онструктор</span>
<svg style="left:171px;top:8px" width="16" height="16" viewBox="0 0 16 16" preserveAspectRatio="none"><rect x="4.500" y="4.500" width="11" height="11" fill="#fff" stroke="#3f5fa8"/><rect x="4.500" y="4.500" width="11" height="2.500" fill="#4a78d0"/><rect x="10" y="8.500" width="4" height="2" fill="#fff" stroke="#333" stroke-width=".7"/><rect x="10" y="12" width="4" height="2" fill="#fff" stroke="#333" stroke-width=".7"/><path d="M6 9.500h2.500M6 13h2.500" stroke="#444" stroke-width=".9"/><path d="M3.500 0v7M0 3.500h7M1 1l5 5M6 1L1 6" stroke="#f5cf3a" stroke-width="1.500"/></svg>
<span id="soz" style="letter-spacing:.3px;left:189px;top:10px">Создат<u>ь</u></span>
<div style="left:239px;top:7px;width:1px;height:17px;background:#8a9fd8;box-shadow:1px 0 0 #fff"></div>
<svg style="left:248px;top:9px" width="12" height="12" viewBox="0 0 13 13"><path d="M1 1l11 11M12 1L1 12" stroke="#000" stroke-width="2"/></svg>
<div style="left:268px;top:7px;width:1px;height:17px;background:#8a9fd8;box-shadow:1px 0 0 #fff"></div>
<svg style="left:275px;top:9px" width="16" height="14" viewBox="0 0 16 14"><rect x="2.500" y="1.500" width="3" height="3.500" fill="#fff" stroke="#2a4ab0" stroke-width=".8"/><path d="M.5 7h7" stroke="#000"/><rect x="10.500" y="7.500" width="3" height="3.500" fill="#fff" stroke="#2a4ab0" stroke-width=".8"/><path d="M8.500 13h7" stroke="#000"/></svg>
<svg style="left:298px;top:9px" width="16" height="14" viewBox="0 0 16 14"><g fill="#fff" stroke="#2a4ab0" stroke-width=".7"><rect x="1.500" y="1.500" width="2" height="2"/><rect x="8.500" y="5.500" width="2" height="2"/><rect x="3.500" y="10.500" width="2" height="2"/></g><path d="M5 2.500h3M12 6.500h3M7 11.500h3" stroke="#000"/></svg>
<svg style="left:321px;top:9px" width="16" height="14" viewBox="0 0 16 14"><g fill="#fff" stroke="#2a4ab0" stroke-width=".7"><rect x="1.500" y="1.500" width="2" height="2"/><rect x="9.500" y="1.500" width="2" height="2"/><rect x="1.500" y="6" width="2" height="2"/><rect x="9.500" y="6" width="2" height="2"/><rect x="1.500" y="10.500" width="2" height="2"/><rect x="9.500" y="10.500" width="2" height="2"/></g><path d="M5 2.500h3M13 2.500h3M5 7h3M13 7h3M5 11.500h3M13 11.500h3" stroke="#000"/></svg>
<svg style="left:344px;top:8px" width="16" height="15" viewBox="0 0 16 15"><path d="M0 1h16M0 4h16M0 6.500h16M0 9h16M0 11.500h16M0 14h16" stroke="#000" stroke-width="1.300"/><path d="M3.500 3v12M7.500 3v12M11.500 3v12" stroke="#ece9d8" stroke-width="1"/></svg>
<div style="left:4px;top:32px;width:113px;height:355px;border:1px solid #808080;box-shadow:inset 1px 1px 0 #fff"></div>
<div style="left:5px;top:52px;width:111px;height:1px;background:#808080;box-shadow:0 1px 0 #fff"></div>
<div style="left:5px;top:366px;width:111px;height:1px;background:#808080;box-shadow:0 1px 0 #fff"></div>
<span id="obj" style="left:37px;top:37px">Объекты</span>
<span id="grp" style="left:41px;top:370px">Группы</span>
<div style="left:6px;top:103px;width:110px;height:26px;background:#ffbf6d;border:1px solid #000080"></div>
<svg style="left:19px;top:58px" width="13" height="13" viewBox="0 0 16 16" preserveAspectRatio="none"><rect x="1" y="1" width="14" height="14" fill="#fbfcff" stroke="#7f98d8"/><rect x="1" y="1" width="14" height="3.500" fill="#5c86e4"/><path d="M1.500 7.500h13M1.500 10h13M1.500 12.500h13M5.500 5v9.500M10 5v9.500" stroke="#a9b9e2" stroke-width="1"/><path d="M15.500 2v13.500H2" fill="none" stroke="#5a6898" stroke-width=".9"/></svg>
<span style="left:45px;top:60px">Таблицы</span>
<svg style="left:17px;top:83px" width="15" height="15" viewBox="0 0 16 16" preserveAspectRatio="none"><rect x="5" y="1" width="10" height="8" fill="#fff" stroke="#5a78c0"/><rect x="5" y="1" width="10" height="2.500" fill="#6a8ee0"/><rect x="1" y="6.500" width="10" height="8.500" fill="#fff" stroke="#5a78c0"/><rect x="1" y="6.500" width="10" height="2.500" fill="#6a8ee0"/><path d="M2.500 11h7M2.500 13h7M7 5.500h7M7 7h4" stroke="#8aa0d8" stroke-width=".9"/></svg>
<span style="left:45px;top:85px">Запросы</span>
<svg style="left:18px;top:109px" width="14" height="13" viewBox="0 0 16 16" preserveAspectRatio="none"><rect x="0.500" y="1.500" width="15" height="13" fill="#fff" stroke="#5a78c0"/><rect x="0.500" y="1.500" width="15" height="3" fill="#5a82dc"/><rect x="8" y="6.500" width="6" height="2.500" fill="#fff" stroke="#333" stroke-width=".8"/><rect x="8" y="10.500" width="6" height="2.500" fill="#fff" stroke="#333" stroke-width=".8"/><path d="M2.500 7.800h3.500M2.500 11.800h3.500" stroke="#444" stroke-width="1"/></svg>
<span style="left:45px;top:111px">Формы</span>
<svg style="left:17px;top:134px" width="13" height="13" viewBox="0 0 16 16" preserveAspectRatio="none"><rect x="3.500" y="1.500" width="10" height="13" rx="1" fill="#4aa860" stroke="#1f6a34"/><rect x="6" y="4" width="5" height="3" fill="#9ad8a8"/><path d="M2 3.500h2.500M2 6h2.500M2 8.500h2.500M2 11h2.500M2 13h2.500" stroke="#333" stroke-width=".9"/></svg>
<span style="left:45px;top:135px">Отчеты</span>
<svg style="left:16px;top:157px" width="16" height="16" viewBox="0 0 16 16" preserveAspectRatio="none"><circle cx="4.500" cy="4.500" r="3.800" fill="#3f86d8" stroke="#2b5fa8" stroke-width=".8"/><path d="M2.500 3c1.500-1 3 0 3 1.500s-2 1.500-3 1z" fill="#6cc04a"/><path d="M5.500 4.500h6.500l2.500 2.500v8.500h-9z" fill="#fff" stroke="#5a78c0"/><rect x="7.500" y="9" width="5" height="4.500" fill="#8aa6e0"/><path d="M8 10.500h4M8 12h4M9.700 9v4.500" stroke="#fff" stroke-width=".6"/></svg>
<span style="left:45px;top:160px">Страницы</span>
<svg style="left:17px;top:183px" width="15" height="13" viewBox="0 0 16 16" preserveAspectRatio="none"><path d="M3 2.500h10c1.500 0 1.500 2.500 0 2.500l-2 6c1.500 0 1.500 2.500 0 2.500H2c-1.500 0-1.500-2.500 0-2.500l2-6c-1.500 0-2.500-2.500-1-2.500z" fill="#f2c860" stroke="#8a6418" stroke-width=".9"/><path d="M5 5h7M3.500 11h7" stroke="#c89a30" stroke-width=".9"/></svg>
<span style="left:45px;top:185px">Макросы</span>
<svg style="left:16px;top:207px" width="16" height="16" viewBox="0 0 16 16" preserveAspectRatio="none"><path d="M2 13l9-10 2 2L4.500 14.500z" fill="#3f78d8" stroke="#1f4a98" stroke-width=".7"/><path d="M14 13L5 3 3 5l8.500 9.500z" fill="#5ab04a" stroke="#2a7028" stroke-width=".7"/><circle cx="8" cy="4" r="1.800" fill="#e04a3a"/><circle cx="2.500" cy="12.500" r="1.800" fill="#e04a3a"/><circle cx="13.500" cy="12.500" r="1.800" fill="#f0c030"/><circle cx="8" cy="9" r="1.500" fill="#f0c030"/></svg>
<span style="left:45px;top:210px">Модули</span>
<div style="left:123px;top:32px;width:343px;height:355px;background:#fff;border:1px solid;border-color:#808080 #d4d0c8 #d4d0c8 #808080;box-shadow:inset 1px 1px 0 #404040"></div>
<svg style="left:129px;top:36px" width="16" height="16" viewBox="0 0 16 16" preserveAspectRatio="none"><rect x="5.500" y="0.500" width="10" height="13" fill="#dfe9f7" stroke="#5a78b0"/><rect x="6" y="1" width="9" height="2" fill="#f0a030"/><rect x="8" y="5" width="6" height="6" fill="#a8c0e8"/><path d="M3.500 12.500h11v3h-9z" fill="#6a86b8" stroke="#3f5a8c" stroke-width=".8"/><rect x="0.500" y="1.500" width="9" height="9" fill="#f6e6ee" stroke="#8a2a5a"/><path d="M2 9c.5-3 2.500-5.500 6-6 .5 2-1 4.500-3.500 5l-1 .2L3 9.500z" fill="#b0306a"/><circle cx="6.500" cy="4.800" r=".9" fill="#f6e6ee"/></svg>
<span style="left:159px;top:38px">Создание формы в режиме конструктора</span>
<svg style="left:129px;top:56px" width="16" height="16" viewBox="0 0 16 16" preserveAspectRatio="none"><rect x="5.500" y="0.500" width="10" height="13" fill="#dfe9f7" stroke="#5a78b0"/><rect x="6" y="1" width="9" height="2" fill="#f0a030"/><rect x="8" y="5" width="6" height="6" fill="#a8c0e8"/><path d="M3.500 12.500h11v3h-9z" fill="#6a86b8" stroke="#3f5a8c" stroke-width=".8"/><rect x="0.500" y="1.500" width="9" height="9" fill="#f6e6ee" stroke="#8a2a5a"/><path d="M2 9c.5-3 2.500-5.500 6-6 .5 2-1 4.500-3.500 5l-1 .2L3 9.500z" fill="#b0306a"/><circle cx="6.500" cy="4.800" r=".9" fill="#f6e6ee"/></svg>
<span style="left:159px;top:58px">Создание формы с помощью мастера</span>
<svg style="left:131px;top:76px" width="15" height="13" viewBox="0 0 16 16" preserveAspectRatio="none"><rect x="0.500" y="1.500" width="15" height="13" fill="#fff" stroke="#5a78c0"/><rect x="0.500" y="1.500" width="15" height="3" fill="#5a82dc"/><rect x="8" y="6.500" width="6" height="2.500" fill="#fff" stroke="#333" stroke-width=".8"/><rect x="8" y="10.500" width="6" height="2.500" fill="#fff" stroke="#333" stroke-width=".8"/><path d="M2.500 7.800h3.500M2.500 11.800h3.500" stroke="#444" stroke-width="1"/></svg>
<span style="left:159px;top:78px">Сведения о занятиях</span>
<svg style="left:131px;top:96px" width="15" height="13" viewBox="0 0 16 16" preserveAspectRatio="none"><rect x="0.500" y="1.500" width="15" height="13" fill="#fff" stroke="#5a78c0"/><rect x="0.500" y="1.500" width="15" height="3" fill="#5a82dc"/><rect x="8" y="6.500" width="6" height="2.500" fill="#fff" stroke="#333" stroke-width=".8"/><rect x="8" y="10.500" width="6" height="2.500" fill="#fff" stroke="#333" stroke-width=".8"/><path d="M2.500 7.800h3.500M2.500 11.800h3.500" stroke="#444" stroke-width="1"/></svg>
<span style="left:159px;top:98px">Сведения об успеваемости</span>
<div style="left:157px;top:114px;width:190px;height:20px;background:#ece9d8"></div>
<svg style="left:131px;top:116px" width="15" height="13" viewBox="0 0 16 16" preserveAspectRatio="none"><rect x="0.500" y="1.500" width="15" height="13" fill="#fff" stroke="#5a78c0"/><rect x="0.500" y="1.500" width="15" height="3" fill="#5a82dc"/><rect x="8" y="6.500" width="6" height="2.500" fill="#fff" stroke="#333" stroke-width=".8"/><rect x="8" y="10.500" width="6" height="2.500" fill="#fff" stroke="#333" stroke-width=".8"/><path d="M2.500 7.800h3.500M2.500 11.800h3.500" stroke="#444" stroke-width="1"/></svg>
<span style="left:159px;top:118px">Сведения об учащихся 8-а класса</span>
<svg style="left:131px;top:136px" width="15" height="13" viewBox="0 0 16 16" preserveAspectRatio="none"><rect x="0.500" y="1.500" width="15" height="13" fill="#fff" stroke="#5a78c0"/><rect x="0.500" y="1.500" width="15" height="3" fill="#5a82dc"/><rect x="8" y="6.500" width="6" height="2.500" fill="#fff" stroke="#333" stroke-width=".8"/><rect x="8" y="10.500" width="6" height="2.500" fill="#fff" stroke="#333" stroke-width=".8"/><path d="M2.500 7.800h3.500M2.500 11.800h3.500" stroke="#444" stroke-width="1"/></svg>
<span style="left:159px;top:138px">Состояние здоровья</span>
</div>
</div>
<div class="win ac" id="w4" style="left:369px;top:230px;width:414px;height:331px">
<div class="ttl" style="width:414px"></div>
<svg style="left:6px;top:8px" width="16" height="14" viewBox="0 0 16 16" preserveAspectRatio="none"><rect x="0.500" y="1.500" width="15" height="13" fill="#fff" stroke="#5a78c0"/><rect x="0.500" y="1.500" width="15" height="3" fill="#5a82dc"/><rect x="8" y="6.500" width="6" height="2.500" fill="#fff" stroke="#333" stroke-width=".8"/><rect x="8" y="10.500" width="6" height="2.500" fill="#fff" stroke="#333" stroke-width=".8"/><path d="M2.500 7.800h3.500M2.500 11.800h3.500" stroke="#444" stroke-width="1"/></svg>
<span class="cap" id="w4cap" style="left:26px;top:9px">Сведения об учащихся 8-а класса</span>
<div class="xb" style="left:341px;top:6px"><em style="left:4px;top:13px;width:7px;height:3px"></em></div>
<div class="xb" style="left:364px;top:6px"><em style="left:4px;top:4px;width:11px;height:3px"></em><em style="left:4px;top:6px;width:1px;height:9px"></em><em style="left:14px;top:6px;width:1px;height:9px"></em><em style="left:4px;top:14px;width:11px;height:1px"></em></div>
<div class="xb c" style="left:387px;top:6px"><svg style="left:4px;top:4px" width="11" height="11" viewBox="0 0 11 11"><path d="M1 1l9 9M10 1l-9 9" stroke="#fff" stroke-width="2.200"/></svg></div>
<div class="face" id="w4c" style="left:4px;top:30px;width:406px;height:297px;overflow:hidden;border-top:1px solid #716f64;border-left:1px solid #716f64">
<div style="left:404px;top:0;width:1px;height:296px;background:#fff"></div>
<div style="left:0;top:295px;width:405px;height:1px;background:#fff"></div>
<div style="left:0;top:0;width:20px;height:276px;border-right:1px solid #000;box-shadow:inset 1px 1px 0 #fff"></div>
<svg style="left:9px;top:4px" width="7" height="12" viewBox="0 0 7 12"><path d="M0 0l7 6.0L0 12z" fill="#000"/></svg>
<div id="fb" style="left:20px;top:0;width:366px;height:276px;overflow:hidden;background:linear-gradient(90deg,#9999ff 0,#9999ff 14px,#b6b6ff 46px,#c3c3ff 62px,#cfcfff 64px,#fff 103px)">
<span class="fl" style="left:5px;top:9px">Код</span>
<div style="left:133px;top:14px;width:109px;height:17px;background:#ffc600"></div>
<div class="fv" style="left:128px;top:9px;width:111px;height:19px;text-align:right;padding-right:2px">8</div>
<span class="fl" style="left:5px;top:35px">Личное дело</span>
<div style="left:133px;top:40px;width:153px;height:16px;background:#ffc600"></div>
<div class="fv" style="left:128px;top:35px;width:155px;height:18px;padding-left:2px">И -76</div>
<span class="fl" style="left:5px;top:62px">Фамилия</span>
<div style="left:133px;top:67px;width:171px;height:16px;background:#ffc600"></div>
<div class="fv" style="left:128px;top:62px;width:173px;height:18px;letter-spacing:0;padding-left:2px">Игнатова</div>
<span class="fl" style="left:5px;top:89px">Имя</span>
<div style="left:133px;top:94px;width:171px;height:16px;background:#ffc600"></div>
<div class="fv" style="left:128px;top:89px;width:173px;height:18px;letter-spacing:0;padding-left:2px">Ксения</div>
<span class="fl" style="left:5px;top:115px">Отчество</span>
<div style="left:133px;top:120px;width:171px;height:16px;background:#ffc600"></div>
<div class="fv" style="left:128px;top:115px;width:173px;height:18px;letter-spacing:0;padding-left:2px">Борисовна</div>
<span class="fl" style="left:5px;top:142px">Дата рождения</span>
<div style="left:133px;top:147px;width:171px;height:16px;background:#ffc600"></div>
<div class="fv" style="left:128px;top:142px;width:173px;height:18px;letter-spacing:0;padding-left:2px">15 июня</div>
<span class="fl" style="left:5px;top:168px">Год рождения</span>
<div style="left:133px;top:173px;width:65px;height:16px;background:#ffc600"></div>
<div class="fv" style="left:128px;top:168px;width:67px;height:18px;text-align:right;padding-right:2px">1993</div>
<span class="fl" style="left:5px;top:195px">Домашний адрес</span>
<div style="left:133px;top:200px;width:234px;height:16px;background:#ffc600"></div>
<div class="fv" style="left:128px;top:195px;width:236px;height:18px;letter-spacing:0;padding-left:2px">ул.К.Маркса,49-68</div>
<span class="fl" style="left:5px;top:221px">Телефон домашний</span>
<div style="left:133px;top:226px;width:234px;height:16px;background:#ffc600"></div>
<div class="fv" style="left:128px;top:221px;width:236px;height:18px;padding-left:2px">4-30-71</div>
<span class="fl" style="left:5px;top:248px">Телефон мобильный</span>
<div style="left:133px;top:253px;width:234px;height:16px;background:#ffc600"></div>
<div class="fv" style="left:128px;top:248px;width:236px;height:18px;padding-left:2px">8-905-054-12-76</div>
</div>
<span style="left:5px;top:280px">Запись:</span>
<div class="btn3" style="left:51px;top:277px;width:22px;height:17px"><div style="left:5px;top:3px;width:2px;height:9px;background:#000"></div><svg style="left:7px;top:3px" width="6" height="9" viewBox="0 0 6 9"><path d="M6 0L0 4.500 6 9z" fill="#000"/></svg></div>
<div class="btn3" style="left:74px;top:277px;width:22px;height:17px"><svg style="left:6px;top:3px" width="6" height="9" viewBox="0 0 6 9"><path d="M6 0L0 4.500 6 9z" fill="#000"/></svg></div>
<div style="left:101px;top:277px;width:64px;height:17px;background:#fff;border:1px solid;border-color:#404040 #ece9d8 #ece9d8 #404040;box-shadow:-1px -1px 0 #aca899"><span style="right:3px;top:2px">8</span></div>
<div class="btn3" style="left:169px;top:277px;width:22px;height:17px"><svg style="left:8px;top:3px" width="6" height="9" viewBox="0 0 6 9"><path d="M0 0l6 4.500L0 9z" fill="#000"/></svg></div>
<div class="btn3" style="left:192px;top:277px;width:22px;height:17px"><svg style="left:6px;top:3px" width="6" height="9" viewBox="0 0 6 9"><path d="M0 0l6 4.500L0 9z" fill="#000"/></svg><div style="left:13px;top:3px;width:2px;height:9px;background:#000"></div></div>
<div class="btn3" style="left:215px;top:277px;width:24px;height:17px"><svg style="left:3px;top:3px" width="6" height="9" viewBox="0 0 6 9"><path d="M0 0l6 4.500L0 9z" fill="#000"/></svg><svg style="left:11px;top:3px" width="9" height="9" viewBox="0 0 9 9"><path d="M4.500 0v9M0 4.500h9M1.200 1.200l6.600 6.600M7.800 1.200L1.200 7.800" stroke="#000" stroke-width="1"/></svg></div>
<span style="left:243px;top:280px">из&nbsp; 20</span>
</div>
</div>
<div id="status" class="a" style="top:815px;height:19px;border-top:0">
<span id="st" style="left:10px;top:4px;letter-spacing:-.25px">Режим формы</span>
<div style="left:9px;top:2px;width:869px;height:17px;border:1px solid;border-color:#c5c2b2 #fff #fff #c5c2b2"></div>
<div style="left:896px;top:2px;width:32px;height:17px;border:1px solid;border-color:#c5c2b2 #fff #fff #c5c2b2"></div>
<div style="left:931px;top:2px;width:25px;height:17px;border:1px solid;border-color:#c5c2b2 #fff #fff #c5c2b2"></div>
<div style="left:959px;top:2px;width:25px;height:17px;border:1px solid;border-color:#c5c2b2 #fff #fff #c5c2b2"></div>
<div style="left:987px;top:2px;width:30px;height:17px;border:1px solid;border-color:#c5c2b2 #fff #fff #c5c2b2"></div>
<div style="left:1020px;top:2px;width:31px;height:17px;border:1px solid;border-color:#c5c2b2 #fff #fff #c5c2b2"></div>
<div style="left:1054px;top:2px;width:26px;height:17px;border:1px solid;border-color:#c5c2b2 #fff #fff #c5c2b2"></div>
<div style="left:1083px;top:2px;width:29px;height:17px;border:1px solid;border-color:#c5c2b2 #fff #fff #c5c2b2"></div>
<div style="left:1115px;top:2px;width:29px;height:17px;border:1px solid;border-color:#c5c2b2 #fff #fff #c5c2b2"></div>
<span style="left:1056px;top:4px;font-size:10px">NUM</span>
</div>
<div id="task" class="a" style="top:834px;height:30px">
<div style="left:0;top:0;width:98px;height:30px;border-radius:0 12px 14px 0/0 15px 15px 0;background:linear-gradient(#3c8f3c 0,#5fb85a 3px,#3f9f3f 7px,#389a38 20px,#2f8a2f 26px,#267a26 30px);box-shadow:inset -3px -2px 5px #1f6a1f,2px 0 3px #1a3f9a"></div>
<svg style="left:10px;top:5px" width="21" height="19" viewBox="0 0 17 17"><path d="M2 3c2-1.500 4-1.500 6 0l-1.500 5.500c-2-1.500-4-1.500-6 0z" fill="#e8502a"/><path d="M9.500 3.500c2 1.500 4 1.500 6 0L14 9c-2 1.500-4 1.500-6 0z" fill="#7ac040"/><path d="M0.200 10c2-1.500 4-1.500 6 0l-1.500 5.500c-2-1.500-4-1.500-6 0z" fill="#3f7ae0" transform="translate(1.300 0)"/><path d="M7.500 10.500c2 1.500 4 1.500 6 0L12 16c-2 1.500-4 1.500-6 0z" fill="#f5c030"/></svg>
<span id="pusk" style="left:35px;top:3px;font:italic bold 20px 'Liberation Sans',sans-serif;color:#fff;text-shadow:1px 1px 1px #1a4a1a;transform-origin:0 50%;transform:scaleX(.84)">пуск</span>
<div class="tk" style="left:106px;top:4px;width:118px"><svg style="left:9px;top:3px" width="17" height="15" viewBox="0 0 17 15"><path d="M.5 2.500q0-1.500 1.500-1.500h4l1.500 2h7q1.500 0 1.500 1.500V13q0 1.500-1.500 1.500H2Q.5 14.500.5 13z" fill="#f5d060" stroke="#a87e1a"/><path d="M1 5h15" stroke="#fbe9a0"/></svg><b><span class="s" style="color:#ffd98a;position:static">2</span> Проводник</b><div class="dn" style="left:105px;top:9px;border-top-color:#fff"></div></div>
<div class="tk" style="left:226px;top:4px;width:118px"><svg style="left:9px;top:3px" width="16" height="16" viewBox="0 0 16 16"><path d="M3 .5h9l3 3v12H3z" fill="#fff" stroke="#4a5a88"/><rect x="0.500" y="3" width="9" height="8" fill="#2a4a9c"/><text x="1.200" y="9.800" font-family="Liberation Sans,sans-serif" font-size="8" font-weight="bold" fill="#fff">W</text><path d="M10.500 8h3M5 12.500h8.500" stroke="#8a94b0"/></svg><b>Конкурсная ...</b></div>
<div class="tk" style="left:346px;top:4px;width:118px"><svg style="left:9px;top:3px" width="16" height="16" viewBox="0 0 16 16" preserveAspectRatio="none"><rect x="3.500" y="0.500" width="12" height="11" fill="#fff" stroke="#3f5fa8"/><rect x="3.500" y="0.500" width="12" height="3" fill="#4a78d0"/><path d="M5 5.500h9.500M5 7.500h9.500M5 9.500h9.500M8 4v7M11.500 4v7" stroke="#7a90c0" stroke-width=".8"/><rect x="0.500" y="5.500" width="6.500" height="9.500" fill="#fff" stroke="#333"/><path d="M2 8h3.500M2 10h3.500M2 12h3.500" stroke="#333" stroke-width=".9"/><path d="M7.500 12.500h7.500" stroke="#3f5fa8"/></svg><b>ученики кла...</b></div>
<div class="tk" style="left:466px;top:4px;width:118px"><svg style="left:9px;top:3px" width="16" height="16" viewBox="0 0 16 16" preserveAspectRatio="none"><rect x="0.500" y="1.500" width="15" height="13" fill="#fff" stroke="#5a78c0"/><rect x="0.500" y="1.500" width="15" height="3" fill="#5a82dc"/><rect x="8" y="6.500" width="6" height="2.500" fill="#fff" stroke="#333" stroke-width=".8"/><rect x="8" y="10.500" width="6" height="2.500" fill="#fff" stroke="#333" stroke-width=".8"/><path d="M2.500 7.800h3.500M2.500 11.800h3.500" stroke="#444" stroke-width="1"/></svg><b>Состояние з...</b></div>
<div class="tk" style="left:586px;top:4px;width:118px"><svg style="left:9px;top:3px" width="16" height="16" viewBox="0 0 16 16" preserveAspectRatio="none"><rect x="1" y="1" width="14" height="14" fill="#fbfcff" stroke="#7f98d8"/><rect x="1" y="1" width="14" height="3.500" fill="#5c86e4"/><path d="M1.500 7.500h13M1.500 10h13M1.500 12.500h13M5.500 5v9.500M10 5v9.500" stroke="#a9b9e2" stroke-width="1"/><path d="M15.500 2v13.500H2" fill="none" stroke="#5a6898" stroke-width=".9"/></svg><b>Сведения о ...</b></div>
<div class="tk" style="left:706px;top:4px;width:118px"><svg style="left:9px;top:3px" width="16" height="16" viewBox="0 0 16 16" preserveAspectRatio="none"><rect x="1" y="1" width="14" height="14" fill="#fbfcff" stroke="#7f98d8"/><rect x="1" y="1" width="14" height="3.500" fill="#5c86e4"/><path d="M1.500 7.500h13M1.500 10h13M1.500 12.500h13M5.500 5v9.500M10 5v9.500" stroke="#a9b9e2" stroke-width="1"/><path d="M15.500 2v13.500H2" fill="none" stroke="#5a6898" stroke-width=".9"/></svg><b>Сведения о...</b></div>
<div class="tk on" style="left:826px;top:4px;width:118px"><svg style="left:9px;top:3px" width="16" height="16" viewBox="0 0 16 16" preserveAspectRatio="none"><rect x="0.500" y="1.500" width="15" height="13" fill="#fff" stroke="#5a78c0"/><rect x="0.500" y="1.500" width="15" height="3" fill="#5a82dc"/><rect x="8" y="6.500" width="6" height="2.500" fill="#fff" stroke="#333" stroke-width=".8"/><rect x="8" y="10.500" width="6" height="2.500" fill="#fff" stroke="#333" stroke-width=".8"/><path d="M2.500 7.800h3.500M2.500 11.800h3.500" stroke="#444" stroke-width="1"/></svg><b>Сведения об...</b></div>
<span style="left:955px;top:9px;color:#9dbcf2">Адрес:</span>
<span style="left:1000px;top:9px;color:#9dbcf2">Мои рисунки</span>
<span style="left:1073px;top:-1px;color:#dbe8fc;font:bold 15px 'Liberation Sans',sans-serif">»</span>
<div style="left:1096px;top:0;width:56px;height:30px;background:linear-gradient(#1690e8 0,#3cb0f5 2px,#1a9ff0 5px,#1596ea 20px,#1283d6 27px,#0f6fc0 30px);border-left:1px solid #0c5ab0;box-shadow:inset 1px 0 0 #3fb5f8"></div>
<div style="left:1086px;top:6px;width:19px;height:19px;border-radius:50%;background:radial-gradient(circle at 35% 30%,#6ab4f8 0,#2a78e0 60%,#1a58c0 100%);border:1px solid #bfe0ff;box-shadow:0 0 2px #0a3a90"><svg style="left:4px;top:3px" width="9" height="11" viewBox="0 0 9 11"><path d="M6.500 1.500l-4 4 4 4" fill="none" stroke="#fff" stroke-width="2.200"/></svg></div>
<span style="left:1113px;top:9px;color:#fff">1:23</span>
</div>
</body>
</html>
